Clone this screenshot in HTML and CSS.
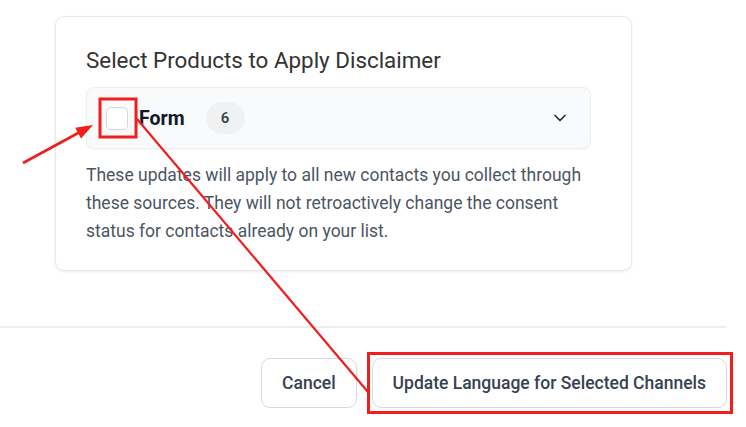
FILE: index.html
```html
<!DOCTYPE html>
<html lang="en">
<head>
<meta charset="utf-8">
<title>Select Products to Apply Disclaimer</title>
<link rel="stylesheet" href="styles.css">
</head>
<body>
<main class="page">
  <section class="card">
    <h2 class="card-title">Select Products to Apply Disclaimer</h2>
    <div class="product-row">
      <span class="checkbox" role="checkbox" aria-checked="false"></span>
      <span class="product-name">Form</span>
      <span class="badge">6</span>
      <svg class="chevron" width="20" height="20" viewBox="0 0 24 24" fill="none" stroke="#1f2937" stroke-width="2" stroke-linecap="round" stroke-linejoin="round"><path d="m6 9 6 6 6-6"/></svg>
    </div>
    <p class="note">These updates will apply to all new contacts you collect through these sources. They will not retroactively change the consent status for contacts already on your list.</p>
  </section>
  <footer class="footer">
    <button class="btn">Cancel</button>
    <button class="btn">Update Language for Selected Channels</button>
  </footer>
  <svg class="annotations" width="746" height="427" viewBox="0 0 746 427" fill="none">
    <rect x="100" y="99" width="36" height="38" stroke="#f01e1e" stroke-width="3"/>
    <rect x="368.5" y="353.5" width="363" height="59" stroke="#f01e1e" stroke-width="3"/>
    <line x1="137" y1="119" x2="368" y2="392" stroke="#f01e1e" stroke-width="2.2"/>
    <line x1="23" y1="163" x2="80" y2="132" stroke="#f01e1e" stroke-width="2.6"/>
    <polygon points="93,125 81,138.4 75.2,127.8" fill="#f01e1e"/>
  </svg>
</main>
</body>
</html>
```
FILE: styles.css
```css
* { box-sizing: border-box; }
html, body { margin: 0; padding: 0; background: #fff; }
body { font-family: Roboto, "Noto Sans", sans-serif; width: 746px; height: 427px; overflow: hidden; }

.page { position: relative; width: 746px; height: 427px; padding-top: 16px; }

.card {
  margin-left: 55px;
  width: 577px;
  border: 1px solid #e7e8eb;
  border-radius: 9px;
  box-shadow: 0 1px 3px rgba(0,0,0,0.07);
  padding: 29px 40px 25px 30px;
}

.card-title {
  margin: 0 0 13px;
  font-size: 22.4px;
  line-height: 28px;
  font-weight: 400;
  color: #333;
}

.product-row {
  display: flex;
  align-items: center;
  height: 62px;
  padding: 0 20px 0 19px;
  background: #f9fafb;
  border: 1px solid #eceef0;
  border-radius: 8px;
  box-shadow: 0 1px 2px rgba(0,0,0,0.04);
}

.checkbox {
  width: 22px;
  height: 23px;
  border: 1px solid #d4d7dc;
  border-radius: 5px;
  background: #fff;
  flex: none;
}

.product-name {
  margin-left: 11px;
  font-size: 19.5px;
  font-weight: 700;
  color: #111827;
}

.badge {
  margin-left: 21px;
  width: 39px;
  height: 32px;
  border-radius: 16px;
  background: #f0f1f3;
  color: #374151;
  font-size: 15px;
  font-weight: 600;
  display: flex;
  align-items: center;
  justify-content: center;
}

.chevron { margin-left: auto; display: block; }

.note {
  margin: 12px 0 0;
  font-size: 17.5px;
  line-height: 28px;
  color: #4b5563;
}

.footer {
  margin-top: 55px;
  margin-right: 19px;
  border-top: 2px solid #eceef0;
  padding-top: 30px;
  display: flex;
  justify-content: flex-end;
  gap: 15px;
}

.btn {
  font-family: Roboto, "Noto Sans", sans-serif;
  height: 50px;
  padding: 0 20px;
  background: #fff;
  border: 1px solid #d6d9de;
  border-radius: 9px;
  font-size: 17.5px;
  font-weight: 500;
  color: #374151;
}

.annotations { position: absolute; top: 0; left: 0; pointer-events: none; }
```
